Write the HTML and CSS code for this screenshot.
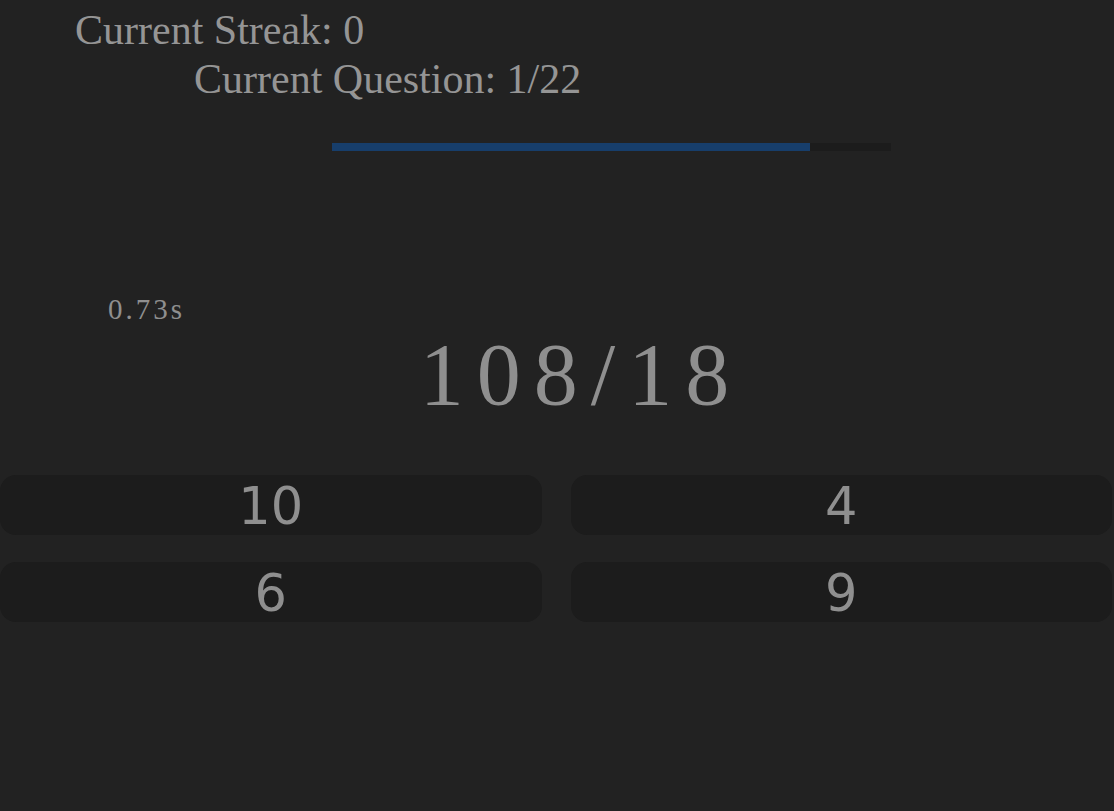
FILE: index.html
```html
<!DOCTYPE html>
<html lang="en">
<head>
<meta charset="utf-8">
<title>Quiz</title>
<link rel="stylesheet" href="styles.css">
</head>
<body>
<div class="quiz">
  <div class="stats">
    <div class="stat streak">Current Streak: 0</div>
    <div class="stat question-count">Current Question: 1/22</div>
  </div>
  <div class="timer-track"><div class="timer-fill" style="width: 85.5%"></div></div>
  <div class="timer-text">0.73s</div>
  <div class="question">108/18</div>
  <div class="answers">
    <button class="answer">10</button>
    <button class="answer">4</button>
    <button class="answer">6</button>
    <button class="answer">9</button>
  </div>
</div>
</body>
</html>
```

FILE: styles.css
```css
html, body {
  margin: 0;
  padding: 0;
  background: #222222;
}

body {
  width: 1114px;
  height: 811px;
  overflow: hidden;
  color: #8f8f8f;
  font-family: "Liberation Serif", "Times New Roman", serif;
}

.stats {
  padding-top: 6px;
  padding-left: 75px;
}

.stat {
  font-size: 42px;
  line-height: 49px;
  color: #959595;
}

.question-count {
  margin-left: 119px;
}

.timer-track {
  margin-top: 39px;
  margin-left: 332px;
  width: 559px;
  height: 8px;
  background: #1c1c1c;
}

.timer-fill {
  height: 100%;
  background: #173e6b;
}

.timer-text {
  margin-top: 141px;
  padding-left: 108px;
  font-size: 29px;
  line-height: 34px;
  letter-spacing: 3px;
  color: #8f8f8f;
}

.question {
  margin-top: 4px;
  padding-left: 48px;
  text-align: center;
  font-size: 88px;
  line-height: 90px;
  letter-spacing: 13px;
  color: #8f8f8f;
}

.answers {
  margin-top: 55px;
  width: 1112px;
  display: grid;
  grid-template-columns: 1fr 1fr;
  column-gap: 29px;
  row-gap: 27px;
}

.answer {
  height: 60px;
  border: none;
  border-radius: 16px;
  background: #1c1c1c;
  color: #8f8f8f;
  font-family: "DejaVu Sans", Verdana, sans-serif;
  font-size: 51px;
  line-height: 56px;
  padding: 4px 0 0 0;
}
```
